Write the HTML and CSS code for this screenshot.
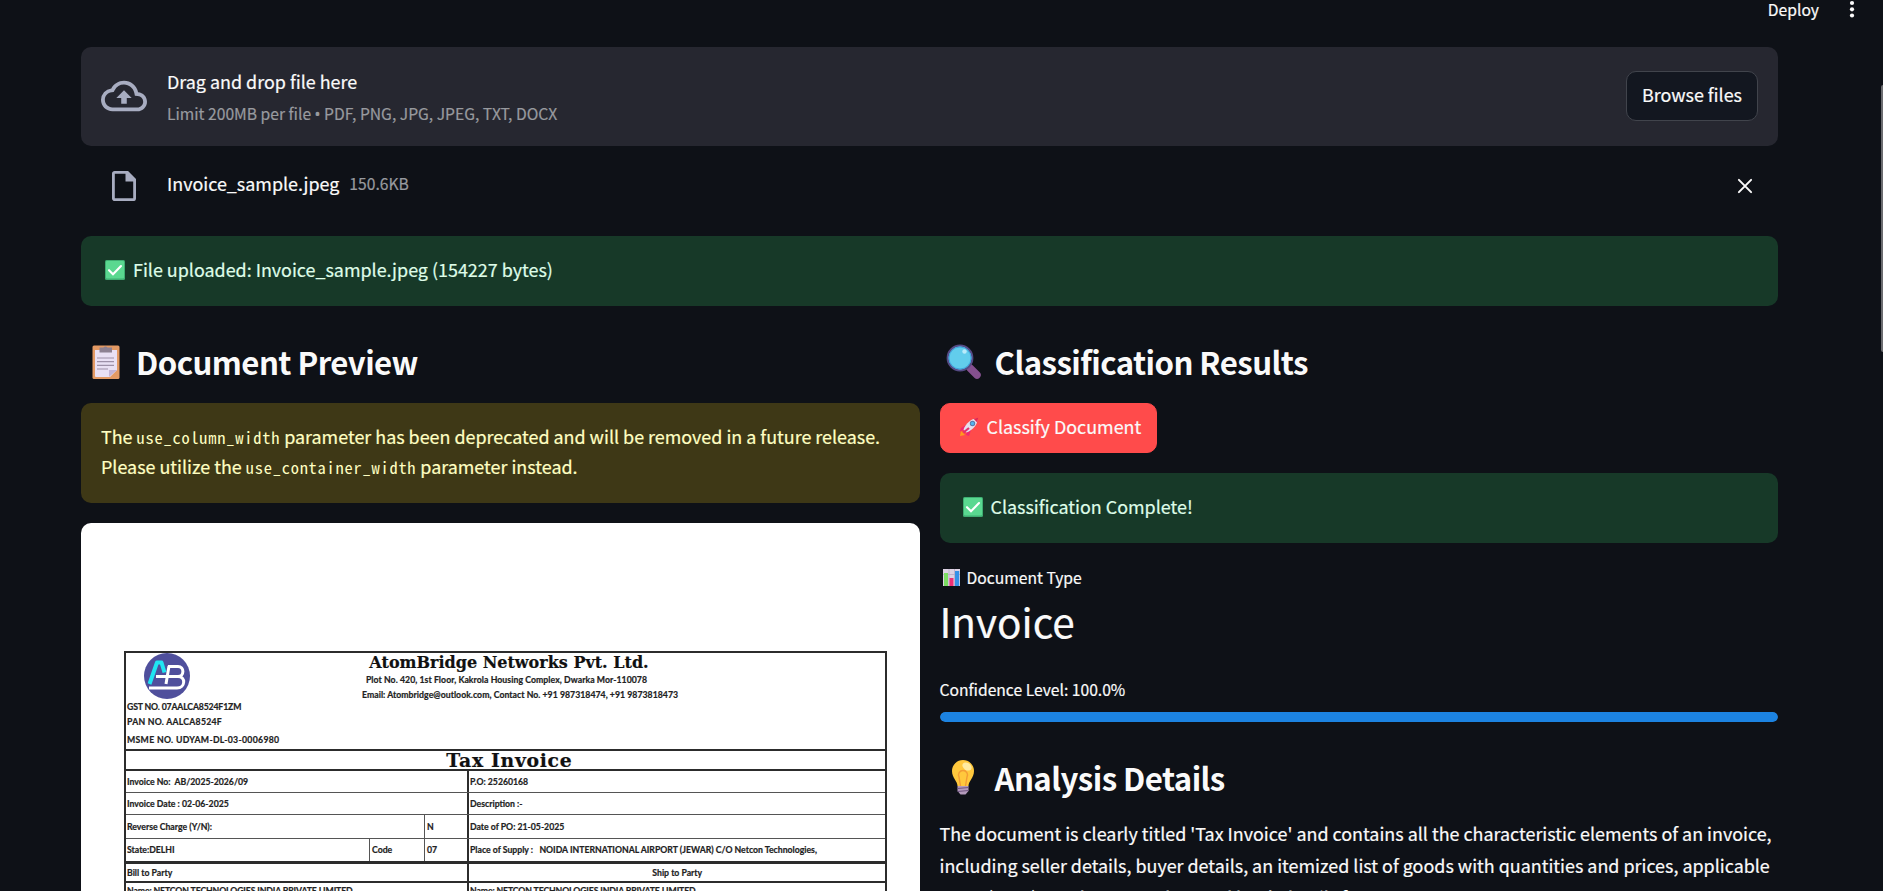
FILE: index.html
```html
<!DOCTYPE html>
<html lang="en">
<head>
<meta charset="utf-8">
<title>Document Classifier</title>
<link rel="stylesheet" href="styles.css">
</head>
<body>
<header class="toolbar">
  <span class="deploy">Deploy</span>
  <svg class="kebab" viewBox="0 0 6 18"><circle cx="3" cy="3" r="2.1"/><circle cx="3" cy="9.3" r="2.1"/><circle cx="3" cy="15.5" r="2.1"/></svg>
</header>
<main class="page">
  <section class="dropzone">
    <svg class="cloud" viewBox="0 0 24 24"><path d="M19.35 10.04A7.49 7.49 0 0 0 12 4C9.11 4 6.6 5.64 5.35 8.04A5.994 5.994 0 0 0 0 14c0 3.31 2.69 6 6 6h13c2.76 0 5-2.24 5-5 0-2.64-2.05-4.78-4.65-4.96zM19 18H6c-2.21 0-4-1.79-4-4 0-2.05 1.53-3.76 3.56-3.97l1.07-.11.5-.95A5.469 5.469 0 0 1 12 6c2.62 0 4.88 1.86 5.39 4.43l.3 1.5 1.53.11A2.98 2.98 0 0 1 22 15c0 1.65-1.35 3-3 3zM8 13h2.55v3h2.9v-3H16l-4-4z"/></svg>
    <div class="drop-text">
      <div class="drop-title">Drag and drop file here</div>
      <div class="small muted">Limit 200MB per file <span class="dot">•</span> PDF, PNG, JPG, JPEG, TXT, DOCX</div>
    </div>
    <button class="btn browse">Browse files</button>
  </section>
  <section class="file-row">
    <svg class="file-icon" viewBox="0 0 24 30"><path d="M2.6 1.4H15.5L22.6 8.5V27.5a1.2 1.2 0 0 1-1.2 1.2H2.6a1.2 1.2 0 0 1-1.2-1.2V2.6a1.2 1.2 0 0 1 1.2-1.2z" fill="none" stroke="#a8adc1" stroke-width="2.8"/><path d="M13.5 1.4h2l7 7v2h-9z" fill="#a8adc1"/></svg>
    <span class="file-name">Invoice_sample.jpeg</span>
    <span class="file-size small muted">150.6KB</span>
    <svg class="close" viewBox="0 0 16 16"><path d="M1.9 1.9 14.1 14.1M14.1 1.9 1.9 14.1" stroke="#fafafa" stroke-width="2" stroke-linecap="round"/></svg>
  </section>
  <div class="alert success">
    <svg class="check" viewBox="0 0 20 20"><rect width="20" height="20" rx="1.5" fill="#3fae72"/><rect x="1" y="1" width="18" height="17.5" rx="1" fill="#5ad890"/><path d="M4 10.2 8 14.3 16 6" fill="none" stroke="#fff" stroke-width="2.1" stroke-linecap="round"/></svg>
    <span>File uploaded: Invoice_sample.jpeg (154227 bytes)</span>
  </div>
  <div class="columns">
    <section class="col">
      <h2 class="heading">
        <svg class="clipboard" viewBox="0 0 28 36"><rect x=".5" y="1.5" width="27" height="33.5" rx="1.5" fill="#e39a64"/><path d="M3 6h22v20l-7 7H4a1 1 0 0 1-1-1z" fill="#e9e0f4"/><path d="M17 33v-7h8z" fill="#c3b4d6"/><path d="M7.500 3.500h4a2.500 2.500 0 0 1 4 0h4.500v5h-12.500z" fill="#8d8192"/><path d="M5 14h17M5 17.600h17M5 21.400h17M5 25h11" stroke="#9d90a8" stroke-width="1.200"/></svg>
        <span>Document Preview</span>
      </h2>
      <div class="alert warning"><p>The <code>use_column_width</code> parameter has been deprecated and will be removed in a future release. Please utilize the <code>use_container_width</code> parameter instead.</p></div>
      <div class="preview">
        <div class="invoice">
          <div class="inv-head">
            <div class="inv-ids">
              <svg class="inv-logo" viewBox="0 0 46 46"><circle cx="23" cy="23" r="23" fill="#4f4f9c"/><path d="M5.500 31 13 9.500h4.500l3 10" fill="none" stroke="#20e4f2" stroke-width="4" stroke-linejoin="round"/><path d="M12 23.500H34M24 13.500h10c6.500 0 6.500 10 0 10M25 13l-3 18M34 23.500c8 0 7.500 11.500-1 11.500H5" fill="none" stroke="#fff" stroke-width="3"/></svg>
              <div class="id gst">GST NO. 07AALCA8524F1ZM</div>
              <div class="id pan">PAN NO. AALCA8524F</div>
              <div class="id msme">MSME NO. UDYAM-DL-03-0006980</div>
            </div>
            <div class="inv-company">
              <div class="company">AtomBridge Networks Pvt. Ltd.</div>
              <div class="addr">Plot No. 420, 1st Floor, Kakrola Housing Complex, Dwarka Mor-110078</div>
              <div class="mail">Email: Atombridge@outlook.com, Contact No. +91 987318474, +91 9873818473</div>
            </div>
          </div>
          <div class="tax-title"><span>Tax Invoice</span></div>
          <div class="row r1"><div class="left"><span>Invoice No:&nbsp; AB/2025-2026/09</span></div><div class="right"><span>P.O: 25260168</span></div></div>
          <div class="row r2"><div class="left"><span>Invoice Date : 02-06-2025</span></div><div class="right"><span>Description :-</span></div></div>
          <div class="row r3"><div class="left"><span class="grow">Reverse Charge (Y/N):</span><span class="cell yn">N</span></div><div class="right"><span>Date of PO: 21-05-2025</span></div></div>
          <div class="row r4"><div class="left"><span class="grow">State:DELHI</span><span class="cell code">Code</span><span class="cell yn">07</span></div><div class="right"><span class="supply">Place of Supply :&nbsp;&nbsp; NOIDA INTERNATIONAL AIRPORT (JEWAR) C/O Netcon Technologies,</span></div></div>
          <div class="row r5"><div class="left"><span>Bill to Party</span></div><div class="right centered"><span>Ship to Party</span></div></div>
          <div class="row r6"><div class="left"><span>Name: NETCON TECHNOLOGIES INDIA PRIVATE LIMITED</span></div><div class="right"><span>Name: NETCON TECHNOLOGIES INDIA PRIVATE LIMITED</span></div></div>
        </div>
      </div>
    </section>
    <section class="col">
      <h2 class="heading results">
        <svg class="lens" viewBox="0 0 36 36"><path d="M24 24l7 7" stroke="#85508f" stroke-width="7.500" stroke-linecap="round"/><circle cx="14" cy="14" r="12.400" fill="#62cdec" stroke="#554b86" stroke-width="2"/><circle cx="14" cy="14" r="11" fill="none" stroke="#3ea6dd" stroke-width="1"/><circle cx="18.500" cy="7.500" r="2.200" fill="#b9ebfa"/></svg>
        <span>Classification Results</span>
      </h2>
      <button class="btn primary">
        <svg class="rocket" viewBox="0 0 20 20"><path d="M1 19l1-5 4 4z" fill="#ff9a1f"/><path d="M7 8 2 11l-1 3 5-1zM12 13l-2 6-3-1 1-4z" fill="#f0286e"/><path d="M18.500 1.500C13 1 7 6 4.500 12.500l3 3C14 13 19 7 18.500 1.500z" fill="#e5dfee"/><path d="M14.500 1.800l4.700-1.100-1 4.800z" fill="#e3264e"/><circle cx="13.500" cy="6.500" r="2.700" fill="#5c78a8"/><circle cx="13.500" cy="6.500" r="1.700" fill="#52b5ed"/><path d="M10 11 4.500 15.500" stroke="#e0306f" stroke-width="2.200"/></svg>
        <span>Classify Document</span>
      </button>
      <div class="alert success complete">
        <svg class="check" viewBox="0 0 20 20"><rect width="20" height="20" rx="1.500" fill="#3fae72"/><rect x="1" y="1" width="18" height="17.500" rx="1" fill="#5ad890"/><path d="M4 10.200 8 14.300 16 6" fill="none" stroke="#fff" stroke-width="2.100" stroke-linecap="round"/></svg>
        <span>Classification Complete!</span>
      </div>
      <div class="metric-label small">
        <svg class="chart" viewBox="0 0 17 17"><rect width="17" height="17" fill="#ddd2e4"/><path d="M0 5.500h17M6 0v17M11.500 0v17" stroke="#b9a9c4" stroke-width=".8"/><rect x="1" y="4" width="4" height="13" fill="#7bdc62"/><rect x="6.500" y="9" width="4" height="8" fill="#ed2f75"/><rect x="12" y="2" width="4.200" height="15" fill="#3691e8"/></svg>
        <span>Document Type</span>
      </div>
      <div class="metric-value">Invoice</div>
      <div class="confidence small">Confidence Level: 100.0%</div>
      <div class="track"><div class="fill" style="width:100%"></div></div>
      <h2 class="heading details">
        <svg class="bulb" viewBox="0 0 22 35"><path d="M5.500 26c0-5-5.500-8-5.500-15a11 11 0 0 1 22 0c0 7-5.500 10-5.500 15z" fill="#ffc83d"/><ellipse cx="15" cy="6.500" rx="5" ry="3.600" fill="#ffeba0" transform="rotate(35 15 6.500)"/><path d="M8.500 26 7 17a4.500 4.500 0 1 1 8 0l-1.500 9" fill="none" stroke="#f29c35" stroke-width="1.400"/><path d="M5.500 26h11v5l-3 3.500h-5l-3-3.500z" fill="#b39abb"/><path d="M5.500 28.500l11-1M5.500 31.500l11-1" stroke="#6f5580" stroke-width="1.100"/></svg>
        <span>Analysis Details</span>
      </h2>
      <p class="analysis">The document is clearly titled 'Tax Invoice' and contains all the characteristic elements of an invoice, including seller details, buyer details, an itemized list of goods with quantities and prices, applicable taxes (IGST), total amount due, and bank details for payment.</p>
    </section>
  </div>
</main>
<div class="scroll-thumb"></div>
</body>
</html>
```
FILE: styles.css
```css
* { box-sizing: border-box; }
html, body { height: 100%; overflow: hidden; }
body {
  margin: 0;
  background: #0e1117;
  color: #fafafa;
  font-family: "Noto Sans CJK SC", "Noto Sans", sans-serif;
  font-size: 17.92px;
  line-height: 32px;
  -webkit-text-stroke: 0.2px currentColor;
}
svg { display: block; flex: none; }
h2, p { margin: 0; }
.small { font-size: 15.67px; line-height: 25px; }
.muted { color: #989a9f; }
.dot { font-family: "Noto Sans", sans-serif; line-height: 1; }

.toolbar {
  height: 47px;
  padding: 0 28px 0 0;
  display: flex;
  justify-content: flex-end;
  align-items: flex-start;
}
.deploy { font-size: 15.67px; line-height: 20px; margin-right: 30px; }
.kebab { width: 6px; height: 18px; fill: #fafafa; }

.page { padding-left: 81px; width: 1778px; }

.dropzone {
  height: 99px;
  padding: 0 20px 2px;
  display: flex;
  align-items: center;
  background: #262730;
  border-radius: 10px;
}
.cloud { width: 46px; height: 46px; fill: #a8adc1; }
.drop-text { flex: 1; margin-left: 20px; }
.drop-title { line-height: 32px; margin-bottom: 4px; }
.drop-text { padding-bottom: 1px; }
.btn {
  display: flex;
  align-items: center;
  height: 50px;
  padding: 0 15px 3px;
  border: 1px solid #41444c;
  border-radius: 10px;
  background: #131720;
  color: #fafafa;
  font: inherit;
}

.file-row {
  height: 90px;
  padding: 0 25px 12px 31px;
  display: flex;
  align-items: center;
}
.file-icon { width: 24px; height: 30px; margin: 1px 31px 0 0; }
.file-name { margin-right: 10px; padding-bottom: 4px; }
.file-size { padding-bottom: 4px; }
.close { width: 16px; height: 16px; margin: 1px 0 0 auto; }

.alert { border-radius: 10px; }
.success {
  height: 70px;
  padding: 0 0 2px 24px;
  display: flex;
  align-items: center;
  background: #173928;
  color: #dffde9;
}
.success span, .primary span { padding-bottom: 2px; }
.check { width: 20px; height: 20px; margin-right: 8px; }

.columns { display: flex; gap: 20px; }
.col { flex: 1 1 0; min-width: 0; }
.heading {
  display: flex;
  align-items: center;
  height: 97px;
  padding: 14px 0 0 11px;
  font-size: 31.2px;
  line-height: 42px;
  font-weight: 600;
  letter-spacing: -0.56px;
  -webkit-text-stroke: 0;
}
.clipboard { width: 28px; height: 36px; margin-right: 16px; }
.warning {
  height: 100px;
  padding: 18px 20px;
  background: #3e3816;
  color: #ffffc2;
  line-height: 30px;
}
code {
  font-family: "Noto Sans Mono CJK SC", "Liberation Mono", monospace;
  font-size: 16.4px;
  line-height: 1;
  letter-spacing: 0.78px;
  -webkit-text-stroke: 0;
}

.preview {
  height: 400px;
  margin-top: 20px;
  padding: 128px 33px 0 43px;
  background: #fff;
  border-radius: 10px 10px 0 0;
}
.invoice {
  border: 2px solid #2c2c2c;
  border-bottom: 0;
  color: #222;
  font-family: Lato, "Open Sans", sans-serif;
  font-size: 8.7px;
  font-weight: 700;
  line-height: 12px;
}
.inv-head { height: 96px; display: flex; }
.inv-ids { width: 237px; padding-left: 1px; white-space: nowrap; }
.inv-logo { width: 46px; height: 46px; margin-left: 17px; }
.gst { margin-top: 2px; letter-spacing: -0.15px; }
.pan { margin-top: 3px; letter-spacing: 0.25px; }
.msme { margin-top: 6px; letter-spacing: 0.32px; }
.inv-company { text-align: center; width: 318px; white-space: nowrap; }
.company { font: 700 16px/19px "DejaVu Serif", serif; color: #111; margin-left: -26px; }
.addr { margin: 2px 0 0 -31px; letter-spacing: 0.06px; }
.mail { margin: 3px 0 0 -4px; letter-spacing: 0.04px; }
.tax-title {
  height: 22px;
  padding-left: 8px;
  border-top: 2px solid #2c2c2c;
  border-bottom: 2px solid #2c2c2c;
  text-align: center;
  font: 700 18.8px/18px "DejaVu Serif", serif;
  letter-spacing: .7px;
  color: #111;
}
.row { display: flex; border-bottom: 1px solid #555; white-space: nowrap; }
.left { width: 343px; display: flex; align-items: stretch; border-right: 2px solid #2c2c2c; }
.left > span, .right > span { display: flex; align-items: center; padding-left: 1px; }
.right { flex: 1; display: flex; }
.grow { flex: 1; }
.left > .cell { border-left: 1px solid #555; padding-left: 2px; }
.yn { width: 43px; }
.code { width: 55px; }
.r1, .r2 { height: 22px; }
.r3 { height: 24px; }
.r4 { height: 25px; border-bottom: 3px solid #2c2c2c; }
.r5 { height: 19px; border-bottom: 2px solid #2c2c2c; }
.r6 { height: 16px; border: 0; letter-spacing: -0.12px; }
.centered { justify-content: center; }

.results { padding-left: 6px; }
.lens { width: 36px; height: 36px; margin-right: 13px; }
.primary { background: #ff4b4b; border-color: #ff4b4b; padding: 0 15px 2px 18px; }
.rocket { width: 20px; height: 20px; margin-right: 8px; }
.complete { margin-top: 20px; padding-left: 23px; }

.metric-label { display: flex; align-items: center; height: 25px; margin-top: 22px; padding-left: 3px; }
.chart { width: 17px; height: 17px; margin-right: 7px; }
.metric-value { font-size: 40.5px; line-height: 56px; margin-top: 3px; }
.confidence { margin-top: 28px; }
.track { height: 10px; margin-top: 10px; border-radius: 5px; background: #262730; overflow: hidden; }
.fill { height: 100%; background: #1c83e1; border-radius: 5px; }
.details { padding-left: 12px; }
.bulb { width: 22px; height: 35px; margin-right: 21px; }
.analysis { margin-top: -2px; }

.scroll-thumb {
  position: absolute;
  right: 0;
  top: 85px;
  width: 2px;
  height: 267px;
  background: #6b6c70;
  border-radius: 2px 0 0 2px;
}
```
